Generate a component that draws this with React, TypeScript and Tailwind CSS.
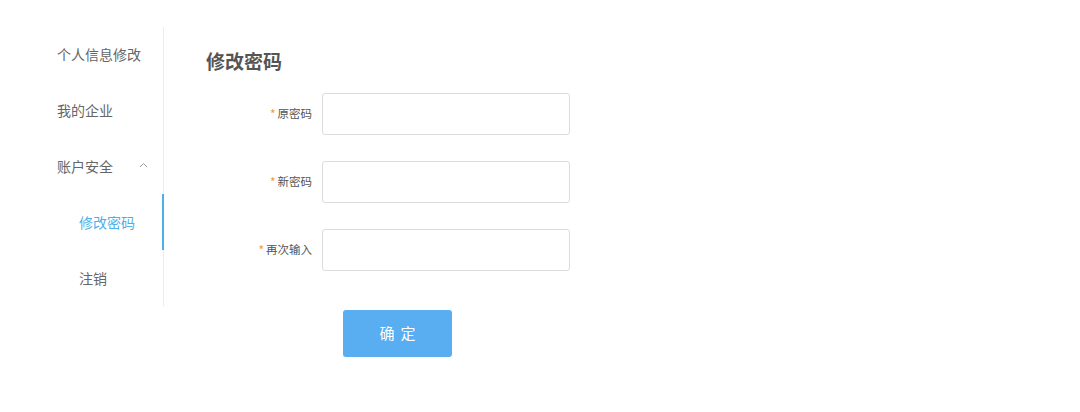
import React from "react";

const font = { fontFamily: '"Noto Sans CJK SC", "Noto Sans", sans-serif' };

function Field({ label }: { label: string }) {
  return (
    <div className="flex items-center">
      <div className="w-[116px] pr-[10px] flex items-center justify-end text-[11.5px] text-[#555]">
        <span className="text-[#f39a2e] mr-[2px] text-[12px] leading-none">*</span>
        {label}
      </div>
      <input className="w-[248px] h-[42px] border border-[#dcdcdc] rounded-[3px] outline-none px-2" />
    </div>
  );
}

export default function App() {
  return (
    <div className="w-[1080px] h-[412px] bg-white flex pt-[27px]" style={font}>
      <aside className="w-[164px] h-[279px] border-r border-[#ececec] flex flex-col relative">
        <div className="h-[56px] flex items-center pl-[57px] text-[14px] text-[#666]">个人信息修改</div>
        <div className="h-[56px] flex items-center pl-[57px] text-[14px] text-[#666]">我的企业</div>
        <div className="h-[56px] flex items-center pl-[57px] text-[14px] text-[#666]">
          账户安全
          <svg className="ml-[26px] mt-[-2px]" width="9" height="6" viewBox="0 0 9 6" fill="none">
            <path d="M1 5 L4.5 1.5 L8 5" stroke="#999" strokeWidth="1" />
          </svg>
        </div>
        <div className="h-[56px] flex items-center pl-[79px] text-[14px] text-[#4fb0e8] relative mr-[-1px] border-r-2 border-[#4fb0e8]">
          修改密码
        </div>
        <div className="h-[56px] flex items-center pl-[79px] text-[14px] text-[#666]">注销</div>
      </aside>
      <main className="pl-[42px] flex flex-col">
        <h1 className="mt-[21px] h-[26px] leading-[26px] text-[19px] font-bold text-[#555]">修改密码</h1>
        <div className="mt-[19px] flex flex-col gap-[26px]">
          <Field label="原密码" />
          <Field label="新密码" />
          <Field label="再次输入" />
        </div>
        <button className="mt-[39px] ml-[137px] w-[109px] h-[47px] rounded-[3px] bg-[#58aef0] text-white text-[15px] tracking-[6px] pl-[6px]">
          确定
        </button>
      </main>
    </div>
  );
}
